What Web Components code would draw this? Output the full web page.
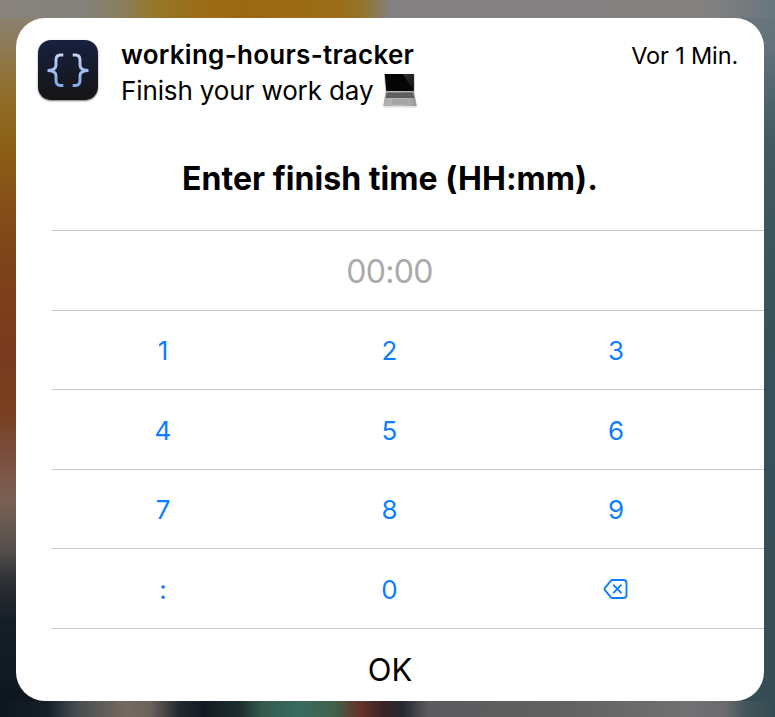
<!DOCTYPE html>
<html lang="de">
<head>
<meta charset="utf-8">
<title>working-hours-tracker</title>
<style>
html,body{margin:0;height:100%;overflow:hidden}
body{font-family:Inter,"Liberation Sans",sans-serif;color:#000}
</style>
</head>
<body>
<blurred-wallpaper>
  <notification-card>
    <app-header slot="header">
      <app-icon slot="icon"></app-icon>
      <span slot="title">working-hours-tracker</span>
      <span slot="time">Vor 1 Min.</span>
      <span slot="subtitle">Finish your work day</span>
      <laptop-glyph slot="subtitle"></laptop-glyph>
    </app-header>
    <span slot="prompt">Enter finish time (HH:mm).</span>
    <time-keypad slot="keypad" placeholder="00:00"></time-keypad>
    <span slot="confirm">OK</span>
  </notification-card>
</blurred-wallpaper>
<script>
function define(name, html, setup) {
  const template = document.createElement('template');
  template.innerHTML = html;
  customElements.define(name, class extends HTMLElement {
    constructor() {
      super();
      this.attachShadow({ mode: 'open' }).append(template.content.cloneNode(true));
    }
    connectedCallback() { if (setup) setup(this, this.shadowRoot); }
  });
}

define('blurred-wallpaper', `<style>
:host{display:block;box-sizing:border-box;width:775px;height:717px;padding:18px 11px 16px 16px;
background:
linear-gradient(90deg,#88837c 0,#84827c 80px,#8a7e60 120px,#94782a 155px,#9b6c16 200px,#9c6912 240px,#9b6c17 340px,#91762f 365px,#838080 390px,#828082 450px,#84827f 700px,#747b7e 745px,#667780 775px) 0 0/100% 18px no-repeat,
linear-gradient(90deg,#0f171e 0,#151f27 48px,#444b50 75px,#74695f 125px,#6b625b 150px,#222830 180px,#121a21 205px,#1c2f30 240px,#335a4d 262px,#3a6b60 300px,#3f6049 335px,#66322a 360px,#3b2226 383px,#26282f 403px,#5b5b5e 428px,#606061 550px,#717173 690px,#6b6b6d 725px,#45545a 745px,#354b54 775px) 0 100%/100% 16px no-repeat,
linear-gradient(180deg,#88837c 0,#8d7f66 30px,#90733a 75px,#8f6a24 105px,#8d5f15 150px,#854f18 200px,#7f4519 250px,#783a1e 350px,#793f20 410px,#7b5040 460px,#7a6054 500px,#554f4d 550px,#2e3034 580px,#161f28 620px,#0f171e 700px) 0 0/50px 100% no-repeat,
linear-gradient(180deg,#6b767d 0,#62717a 50px,#4e646c 100px,#42595f 150px,#365059 350px,#364c55 717px) 100% 0/50px 100% no-repeat}
</style><slot></slot>`);

define('notification-card', `<style>
:host{display:flex;flex-direction:column;height:683px;background:#fff;border-radius:29px;overflow:hidden}
.prompt{height:84px;padding-bottom:20px;box-sizing:border-box;display:flex;align-items:center;justify-content:center;font-size:32px;font-weight:700;letter-spacing:.05px;white-space:nowrap}
.confirm{flex:1;display:flex;align-items:center;justify-content:center;padding-top:9px;font-size:31px}
</style>
<slot name="header"></slot>
<div class="prompt"><slot name="prompt"></slot></div>
<slot name="keypad"></slot>
<div class="confirm"><slot name="confirm"></slot></div>`);

define('app-header', `<style>
:host{display:flex;height:128px;padding:22px 26px 0 22px;box-sizing:border-box}
.copy{flex:1;margin-left:23px}
.top{display:flex;justify-content:space-between;align-items:baseline;height:32px;line-height:32px;margin-top:-1px}
.title{font-size:26px;font-weight:600;letter-spacing:.27px}
.time{font-size:23.5px;letter-spacing:-.15px}
.sub{display:flex;align-items:center;gap:10px;font-size:26px;letter-spacing:-.12px;height:36px;line-height:36px;margin-top:2px}
</style>
<slot name="icon"></slot>
<div class="copy"><div class="top"><span class="title"><slot name="title"></slot></span><span class="time"><slot name="time"></slot></span></div>
<div class="sub"><slot name="subtitle"></slot></div></div>`);

define('app-icon', `<style>
:host{display:block;width:60px;height:60px;border-radius:13px;background:linear-gradient(#17213f,#151515);box-shadow:0 1px 2px #0008}
svg{display:block}
</style>
<svg width="60" height="60" viewBox="0 0 60 60" fill="none" stroke="url(#g)" stroke-width="2.9">
<defs><linearGradient id="g" gradientUnits="userSpaceOnUse" x1="0" y1="13" x2="0" y2="48"><stop stop-color="#c5d4f5"/><stop offset="1" stop-color="#80a9ed"/></linearGradient></defs>
<path d="M25.300 15H22.500Q18 15 18 20V25Q18 30.500 9.500 30.500Q18 30.500 18 36V40.500Q18 45.500 22.500 45.500H25.300"/>
<path d="M34.700 15H37.500Q42 15 42 20V25Q42 30.500 50.500 30.500Q42 30.500 42 36V40.500Q42 45.500 37.500 45.500H34.700"/>
</svg>`);

define('laptop-glyph', `<style>:host{display:block;width:34px;height:34px}svg{display:block}</style>
<svg width="34" height="34" viewBox="0 0 34 34">
<defs><linearGradient id="b" x2="1"><stop stop-color="#aaa"/><stop offset=".5" stop-color="#bcbcbc"/><stop offset="1" stop-color="#999"/></linearGradient>
<linearGradient id="s" x2="1" y2="1"><stop stop-color="#333"/><stop offset="1" stop-color="#111"/></linearGradient></defs>
<path d="M1 0H31.500V18H2.500Z" fill="#b5b5b5"/><path d="M1.800 0H30.700V17H3.300Z" fill="#050505"/>
<path d="M20 0H30.700V16.500Z" fill="url(#s)"/>
<path d="M2.700 17.500H31L33.700 31Q33.800 33.300 32 33.300H1.500Q0 33.300.3 31Z" fill="url(#b)"/>
<path d="M3.700 18.500H30L31.200 24H2.500Z" fill="#555"/>
<path d="M4 19.900H29.700M3.500 21.600H30M3.100 23.200H30.500" stroke="#858585" stroke-width=".5" stroke-dasharray="1.500 .6"/>
<path d="M9.500 25H24.500L25 30.500H8.500Z" fill="#a4a4a4"/><path d="M.5 32.500H33.500" stroke="#e2e2e2"/>
</svg>`);

define('delete-glyph', `<style>:host{display:block;width:26px;height:22px}svg{display:block}</style>
<svg width="26" height="22" viewBox="0 0 26 22" fill="none" stroke="currentColor" stroke-width="1.900" stroke-linecap="round" stroke-linejoin="round">
<path d="M9.500 2H20.500Q23.500 2 23.500 5V17Q23.500 20 20.500 20H9.500Q8.600 20 7.900 19.300L2 12.200Q1 11 2 9.800L7.900 2.700Q8.600 2 9.500 2Z"/>
<path d="M10.700 7.200L18 14.600M18 7.200L10.700 14.600"/></svg>`);

define('time-keypad', `<style>
:host{display:grid;grid-template-rows:repeat(5,79.500px);margin-left:36px;height:398.500px;color:#0f7dff;border-bottom:1px solid #cbcbcb;box-sizing:border-box}
.row{display:grid;grid-template-columns:222px 231px 222px;border-top:1px solid #cbcbcb;box-sizing:border-box}
.cell{display:flex;align-items:center;justify-content:center;font-size:26px;padding-top:2px}
.display{grid-column:1/-1;color:#aaa;font-size:32px;font-weight:380;letter-spacing:-.7px;padding-top:3px}
</style><div class="row"><div class="cell display"></div></div>`, (host, root) => {
  root.querySelector('.display').textContent = host.getAttribute('placeholder');
  for (const keys of ['123', '456', '789', ':0<']) {
    const row = document.createElement('div');
    row.className = 'row';
    for (const key of keys) {
      const cell = document.createElement('div');
      cell.className = 'cell';
      if (key === '<') cell.append(document.createElement('delete-glyph'));
      else cell.textContent = key;
      row.append(cell);
    }
    root.append(row);
  }
});
</script>
</body>
</html>
